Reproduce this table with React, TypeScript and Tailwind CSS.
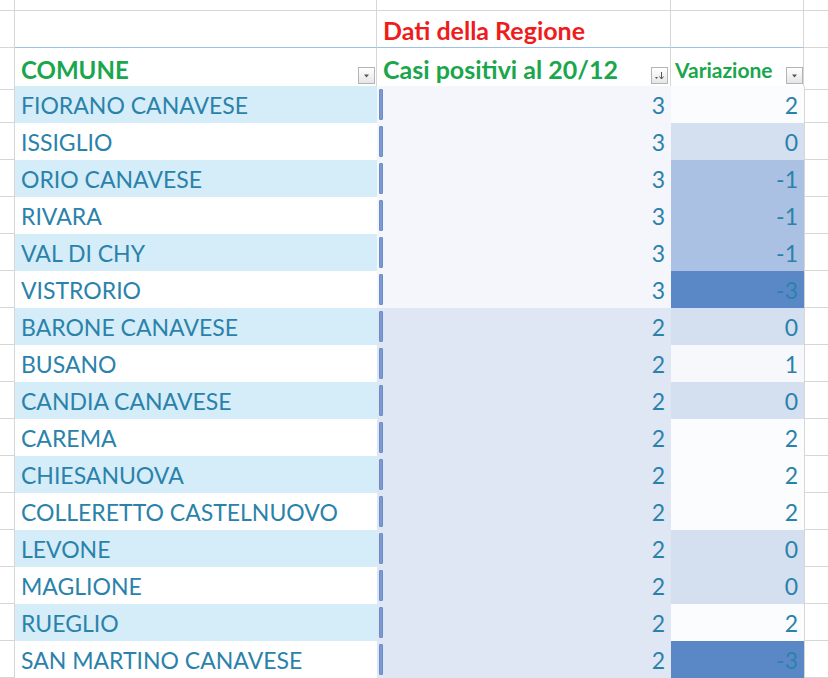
import React from "react";

const rows: [string, number, number][] = [
  ["FIORANO CANAVESE", 3, 2],
  ["ISSIGLIO", 3, 0],
  ["ORIO CANAVESE", 3, -1],
  ["RIVARA", 3, -1],
  ["VAL DI CHY", 3, -1],
  ["VISTRORIO", 3, -3],
  ["BARONE CANAVESE", 2, 0],
  ["BUSANO", 2, 1],
  ["CANDIA CANAVESE", 2, 0],
  ["CAREMA", 2, 2],
  ["CHIESANUOVA", 2, 2],
  ["COLLERETTO CASTELNUOVO", 2, 2],
  ["LEVONE", 2, 0],
  ["MAGLIONE", 2, 0],
  ["RUEGLIO", 2, 2],
  ["SAN MARTINO CANAVESE", 2, -3],
];

const varBg: Record<number, string> = {
  2: "bg-[#fbfcfe]",
  1: "bg-[#f6f8fc]",
  0: "bg-[#d4dff0]",
  "-1": "bg-[#aac1e3]",
  "-3": "bg-[#5a88c6]",
};

function FilterBtn({ sort }: { sort?: boolean }) {
  return (
    <div className="w-[17px] h-[17px] border border-[#b4b4b4] bg-gradient-to-b from-white to-[#e6e6e6] flex items-center justify-center">
      {sort ? (
        <svg width="11" height="11" viewBox="0 0 11 11">
          <path d="M1 7h3l-1.5 2z" fill="#555" />
          <path d="M7.5 2v6.5M5.5 6.5l2 2.5 2-2.5" stroke="#555" strokeWidth="1" fill="none" />
        </svg>
      ) : (
        <svg width="9" height="9" viewBox="0 0 9 9">
          <path d="M2 3.5h5l-2.5 3z" fill="#555" />
        </svg>
      )}
    </div>
  );
}

export default function App() {
  const grid = "grid grid-cols-[15px_362px_294px_133px_24px]";
  const line = "border-[#d6d6d6]";

  return (
    <div className="w-[828px] h-[678px] overflow-hidden bg-white font-['Lato',sans-serif]">
      {/* top empty row */}
      <div className={`${grid} h-[11px]`}>
        <div className={`border-r border-b ${line}`} />
        <div className={`border-r border-b ${line}`} />
        <div className={`border-r border-b ${line}`} />
        <div className={`border-r border-b ${line}`} />
        <div className={`border-b ${line}`} />
      </div>

      {/* group header */}
      <div className={`${grid} h-[37px]`}>
        <div className={`border-r border-b ${line}`} />
        <div className={`border-r ${line} border-b border-b-[#9cc3e0]`} />
        <div className={`border-r ${line} border-b border-b-[#9cc3e0] flex items-end pl-[6px] pb-[4px]`}>
          <span className="text-[25px] font-bold text-[#ee1c1c] leading-none">Dati della Regione</span>
        </div>
        <div className={`border-r ${line} border-b border-b-[#9cc3e0]`} />
        <div className={`border-b ${line}`} />
      </div>

      {/* column headers */}
      <div className={`${grid} h-[38px]`}>
        <div className={`border-r border-b ${line}`} />
        <div className={`border-r ${line} border-b border-b-[#b5b5b5] flex items-center justify-between pl-[6px] pr-[1px]`}>
          <span className="text-[24px] font-bold text-[#19a64c] mt-[3px]">COMUNE</span>
          <div className="mt-[15px]">
            <FilterBtn />
          </div>
        </div>
        <div className={`border-r ${line} border-b border-b-[#b5b5b5] flex items-center justify-between pl-[6px] pr-[2px]`}>
          <span className="text-[25px] font-bold text-[#19a64c] mt-[3px]">Casi positivi al 20/12</span>
          <div className="mt-[15px]">
            <FilterBtn sort />
          </div>
        </div>
        <div className={`border-r ${line} border-b border-b-[#b5b5b5] flex items-center justify-between pl-[4px] pr-[0px]`}>
          <span className="text-[21px] font-bold text-[#19a64c] mt-[3px]">Variazione</span>
          <div className="mt-[15px]">
            <FilterBtn />
          </div>
        </div>
        <div className={`border-b ${line}`} />
      </div>

      {/* data rows */}
      {rows.map(([name, casi, delta], i) => (
        <div key={name} className={`${grid} h-[37px] text-[23px] text-[#2a82ab]`}>
          <div className={`border-r border-b ${line}`} />
          <div className={`flex items-center pl-[6px] pt-[2px] ${i % 2 === 0 ? "bg-[#d5edf8]" : "bg-white"}`}>
            {name}
          </div>
          <div className={`flex items-center justify-between pr-[6px] ${casi === 3 ? "bg-[#f5f6fc]" : "bg-[#dfe6f4]"}`}>
            <div className="self-stretch my-[3px] ml-[2px] w-[4px] rounded-[1px] bg-[#7b9bd2] border border-[#6a8cc8]" />
            <span className="pt-[2px]">{casi}</span>
          </div>
          <div className={`flex items-center justify-end pr-[6px] pt-[2px] ${varBg[delta]}`}>{delta}</div>
          <div className={`border-b border-l ${line}`} />
        </div>
      ))}
    </div>
  );
}
